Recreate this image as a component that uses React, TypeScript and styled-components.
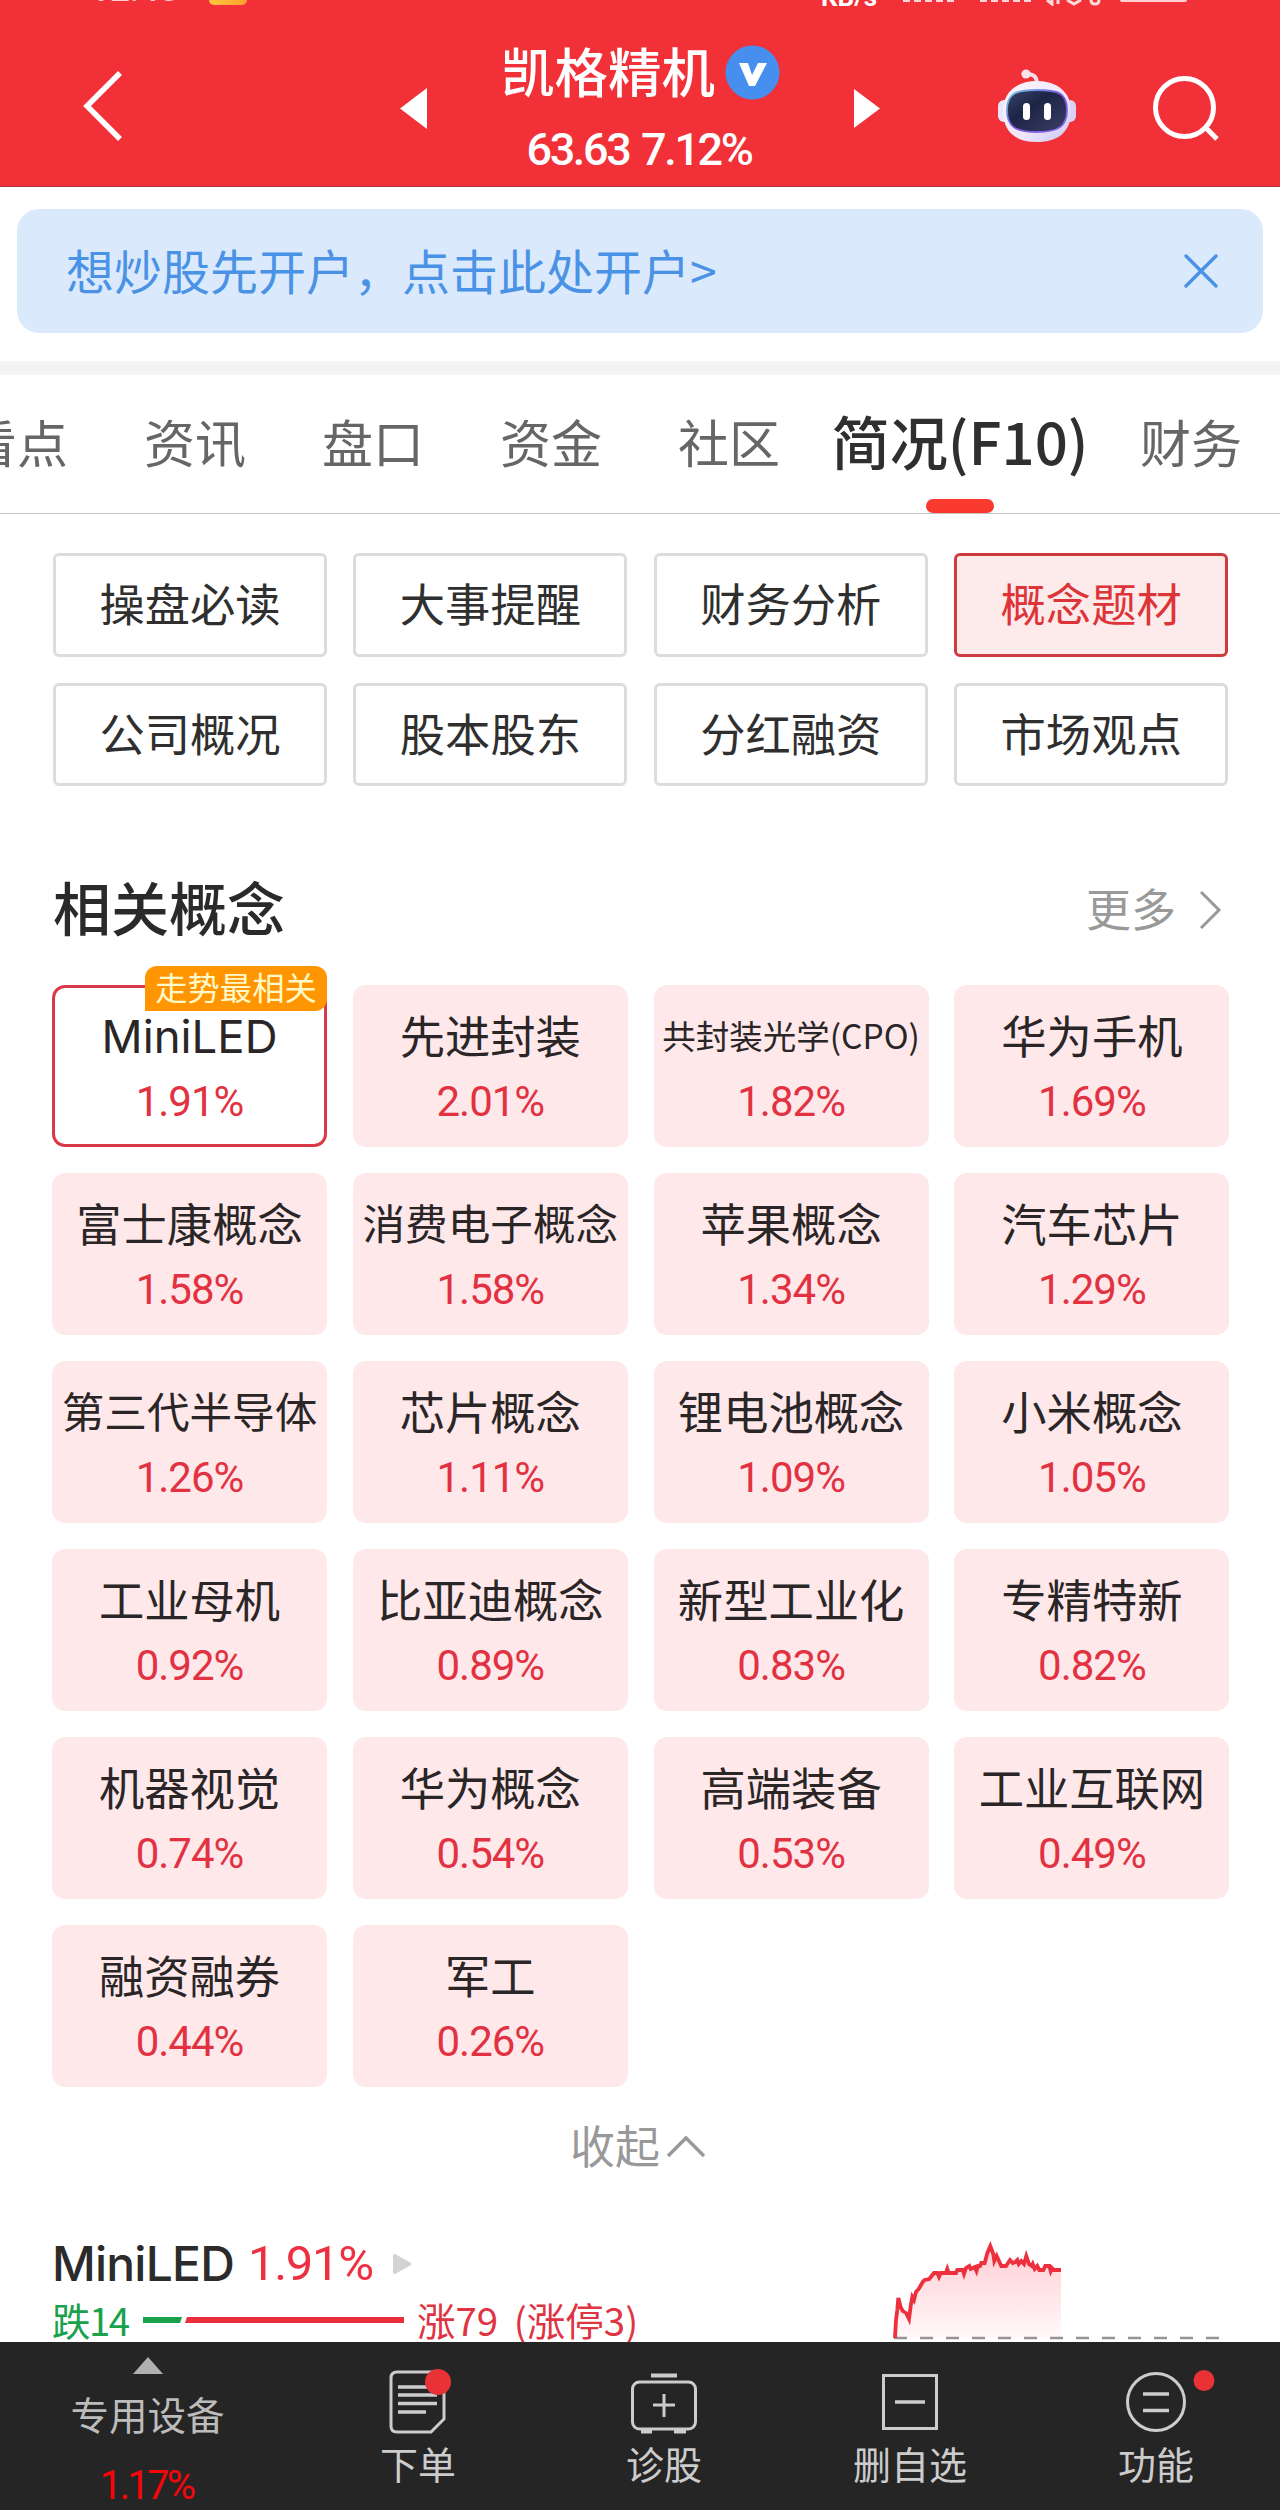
import React from 'react';
import styled, { createGlobalStyle, css } from 'styled-components';

const CJK = "'Noto Sans CJK SC', sans-serif";
const NUM = "Roboto, 'Noto Sans CJK SC', sans-serif";

const Global = createGlobalStyle`
  * { box-sizing: border-box; }
  body { margin: 0; background: #fff; font-family: ${CJK}; color: #2b2b2b; }
`;

const Page = styled.div`
  width: 1280px;
  height: 2510px;
  overflow: hidden;
  display: flex;
  flex-direction: column;
  background: #fff;
`;

/* ---------- header ---------- */
const Header = styled.header`
  height: 187px;
  flex: none;
  background: #f23038;
  border-bottom: 1px solid #a83a42;
  color: #fff;
`;
const StatusBar = styled.div`
  height: 6px;
  overflow: hidden;
  display: flex;
  align-items: flex-start;
  padding: 0 93px 0 90px;
`;
const Clock = styled.span`
  font: 500 35px/32px ${NUM};
  margin-top: -26px;
  width: 119px;
  opacity: 0.75;
`;
const StatusChip = styled.span`
  width: 38px;
  height: 5px;
  border-radius: 0 0 8px 8px;
  background: linear-gradient(90deg, #ffc53d, #ff9f2e);
`;
const Speed = styled.span`
  font: 700 26px/26px ${NUM};
  margin: -16px 23px 0 auto;
  width: 59px;
`;
const Signal = styled.span`
  width: 53px;
  height: 2px;
  margin-right: 24px;
  background: repeating-linear-gradient(90deg, #ffd5d7 0 7px, transparent 7px 11px);
`;
const Battery = styled.span`
  width: 67px;
  height: 2px;
  border-radius: 0 0 6px 6px;
  background: #ffd0d2;
  margin-left: 18px;
`;
const NavRow = styled.div`
  height: 180px;
  display: flex;
  align-items: flex-start;
  padding: 0 61px 0 82px;
`;
const Glyph = styled.svg<{ $top?: number; $left?: number }>`
  display: block;
  flex: none;
  overflow: visible;
  margin-top: ${(p) => p.$top ?? 0}px;
  margin-left: ${(p) => p.$left ?? 0}px;
`;
const StockTitle = styled.div`
  width: 300px;
  margin-left: 65px;
  display: flex;
  flex-direction: column;
  align-items: center;
`;
const StockName = styled.div`
  display: flex;
  align-items: center;
  gap: 10px;
  margin-top: 36px;
  height: 60px;
  font-size: 53.5px;
  line-height: 60px;
  font-weight: 500;
  white-space: nowrap;
`;
const Lifted = styled.span`
  padding-bottom: 4px;
`;
const Price = styled.div`
  margin-top: 22px;
  font: 500 45px/52px ${NUM};
  letter-spacing: -2.4px;
  word-spacing: 3px;
  padding-right: 3px;
  white-space: nowrap;
`;

/* ---------- banner ---------- */
const Banner = styled.div`
  margin: 22px 17px 28px;
  height: 124px;
  flex: none;
  border-radius: 22px;
  background: #dae9fb;
  color: #4a92e6;
  display: flex;
  align-items: center;
  justify-content: space-between;
  padding: 0 45px 0 49px;
  font-size: 48px;
  line-height: 60px;
`;
const Divider = styled.div`
  height: 14px;
  flex: none;
  background: #f4f4f4;
`;

/* ---------- tabs ---------- */
const Tabs = styled.nav`
  height: 139px;
  flex: none;
  border-bottom: 1px solid #c4c4c4;
  display: flex;
  align-items: stretch;
`;
const Tab = styled.div<{ $active?: boolean }>`
  width: 178px;
  flex: none;
  display: flex;
  flex-direction: column;
  align-items: center;
  white-space: nowrap;
  font-size: 51px;
  line-height: 60px;
  padding-top: 36px;
  color: #666;
  &:first-child { margin-left: -72px; }
  ${(p) =>
    p.$active &&
    css`
      width: 284px;
      padding-top: 35px;
      color: #2f2f2f;
      font-weight: 500;
      font-size: 58.2px;
    `}
`;
const Indicator = styled.div`
  width: 68px;
  height: 14px;
  margin-top: 29px;
  border-radius: 7px;
  background: #fa3a2f;
`;

/* ---------- sub navigation ---------- */
const SubNav = styled.div`
  display: grid;
  grid-template-columns: repeat(4, 274px);
  grid-template-rows: 104px 103px;
  gap: 26px 26.4px;
  padding: 39px 0 0 53px;
  flex: none;
`;
const SubButton = styled.div<{ $active?: boolean }>`
  border: 3px solid ${(p) => (p.$active ? '#cf3a40' : '#dcdcdc')};
  border-radius: 6px;
  background: ${(p) => (p.$active ? '#fdeaea' : '#fff')};
  color: ${(p) => (p.$active ? '#dc3438' : '#2f2f2f')};
  display: flex;
  justify-content: center;
  align-items: center;
  font-size: 45.3px;
  line-height: 60px;
  padding-bottom: 6px;
`;

/* ---------- concepts ---------- */
const SectionHead = styled.div`
  height: 80px;
  margin: 83px 59px 0 53px;
  flex: none;
  display: flex;
  align-items: center;
  justify-content: space-between;
`;
const SectionTitle = styled.h2`
  margin: 0;
  padding-bottom: 5px;
  font-size: 58px;
  line-height: 75px;
  font-weight: 500;
  color: #2a2a2a;
`;
const More = styled.div`
  display: flex;
  align-items: center;
  gap: 23px;
  margin-top: 2px;
  color: #999;
  font-size: 45px;
  line-height: 60px;
`;
const Tiles = styled.div`
  display: grid;
  grid-template-columns: repeat(4, 275px);
  grid-auto-rows: 162px;
  gap: 26px 25.8px;
  padding: 36px 0 0 52px;
  flex: none;
`;
const Tile = styled.div<{ $selected?: boolean }>`
  position: relative;
  border-radius: 13px;
  background: ${(p) => (p.$selected ? '#fff' : '#fee8ea')};
  box-shadow: ${(p) => (p.$selected ? 'inset 0 0 0 3px #d93a48' : 'none')};
  display: flex;
  flex-direction: column;
  align-items: center;
  padding-top: 18px;
`;
const TileName = styled.div<{ $size: number; $latin?: boolean; $drop: number }>`
  font-family: ${(p) => (p.$latin ? `Inter, ${CJK}` : CJK)};
  font-size: ${(p) => p.$size}px;
  padding-top: ${(p) => p.$drop * 2}px;
  line-height: ${(p) => 62 - p.$drop * 2}px;
  color: #2a2526;
  white-space: nowrap;
`;
const TilePct = styled.div`
  margin-top: 11px;
  font: 400 42px/52px ${NUM};
  letter-spacing: -1px;
  color: #e23242;
`;
const Badge = styled.div`
  position: absolute;
  right: 0;
  top: -19px;
  width: 182px;
  height: 45px;
  border-radius: 12px 12px 12px 0;
  background: #ff9500;
  color: #fff8c8;
  font-size: 32.3px;
  line-height: 41px;
  text-align: center;
  white-space: nowrap;
`;
const Collapse = styled.div`
  height: 60px;
  margin-top: 30px;
  flex: none;
  display: flex;
  align-items: center;
  padding-left: 570px;
  gap: 7px;
  color: #999;
  font-size: 45px;
  line-height: 60px;
`;

/* ---------- detail ---------- */
const Detail = styled.div`
  flex: 1;
  min-height: 0;
  display: flex;
  padding: 57px 59px 0 52px;
  justify-content: space-between;
`;
const DetailInfo = styled.div`
  display: flex;
  flex-direction: column;
`;
const DetailTitle = styled.div`
  display: flex;
  align-items: center;
  height: 56px;
  margin-top: 2px;
`;
const DetailName = styled.span`
  font: 500 48px/56px Inter, ${CJK};
  letter-spacing: -0.8px;
  width: 196px;
  white-space: nowrap;
`;
const DetailPct = styled.span`
  font: 400 49px/56px ${NUM};
  width: 145px;
  letter-spacing: -1.3px;
  color: #ee3040;
`;
const Breadth = styled.div`
  display: flex;
  align-items: center;
  height: 56px;
  font-size: 38.5px;
  line-height: 56px;
  white-space: nowrap;
`;
const Down = styled.span`
  color: #18a24c;
  width: 91px;
  letter-spacing: -1.6px;
  padding-bottom: 2px;
`;
const Up = styled.span`
  color: #df3442;
  margin-left: 13px;
  word-spacing: 7px;
  padding-bottom: 2px;
`;

/* ---------- footer ---------- */
const Footer = styled.footer`
  height: 168px;
  flex: none;
  background: #252525;
  color: #ccc;
  display: grid;
  grid-template-columns: 295px repeat(4, 246px);
`;
const Industry = styled.div`
  display: flex;
  flex-direction: column;
  align-items: center;
  font-size: 38.5px;
  line-height: 50px;
  color: #bcbcbc;
`;
const IndustryName = styled.div`
  margin-top: 14px;
`;
const IndustryPct = styled.div`
  margin-top: 23px;
  font: 400 40px/50px ${NUM};
  letter-spacing: -2.8px;
  padding-right: 2px;
  color: #f5060a;
`;
const Action = styled.div`
  display: flex;
  flex-direction: column;
  align-items: center;
  padding-top: 20px;
  font-size: 38px;
  line-height: 46px;
`;

type Concept = [name: string, pct: string, size?: number, drop?: number];
const concepts: Concept[] = [
  ['MiniLED', '1.91%', 45.5, 3],
  ['先进封装', '2.01%'],
  ['共封装光学(CPO)', '1.82%', 33.5, 1],
  ['华为手机', '1.69%'],
  ['富士康概念', '1.58%'],
  ['消费电子概念', '1.58%', 42.6],
  ['苹果概念', '1.34%'],
  ['汽车芯片', '1.29%'],
  ['第三代半导体', '1.26%', 42.6],
  ['芯片概念', '1.11%'],
  ['锂电池概念', '1.09%'],
  ['小米概念', '1.05%'],
  ['工业母机', '0.92%'],
  ['比亚迪概念', '0.89%'],
  ['新型工业化', '0.83%'],
  ['专精特新', '0.82%'],
  ['机器视觉', '0.74%'],
  ['华为概念', '0.54%'],
  ['高端装备', '0.53%'],
  ['工业互联网', '0.49%'],
  ['融资融券', '0.44%'],
  ['军工', '0.26%'],
];
const subNav = ['操盘必读', '大事提醒', '财务分析', '概念题材', '公司概况', '股本股东', '分红融资', '市场观点'];
const tabs = ['看点', '资讯', '盘口', '资金', '社区', '简况(F10)', '财务'];

const Robot = () => (
  <Glyph $top={58} $left={117} width="80" height="78" viewBox="0 0 80 78">
    <defs>
      <linearGradient id="shell" x1="0" y1="0" x2="1" y2="1">
        <stop offset="0" stopColor="#fff5fa" />
        <stop offset="0.6" stopColor="#eee6fa" />
        <stop offset="1" stopColor="#c9c6f2" />
      </linearGradient>
      <linearGradient id="rim" x1="0" y1="0" x2="1" y2="1">
        <stop offset="0" stopColor="#6fd0e4" />
        <stop offset="0.5" stopColor="#7a52d8" />
        <stop offset="1" stopColor="#8a6cf2" />
      </linearGradient>
      <linearGradient id="face" x1="0" y1="0" x2="1" y2="1">
        <stop offset="0" stopColor="#3a4467" />
        <stop offset="0.4" stopColor="#1d2547" />
        <stop offset="1" stopColor="#3b3f66" />
      </linearGradient>
    </defs>
    <path d="M29 10 Q40 9 40 20" fill="none" stroke="#f3dfea" strokeWidth="4" />
    <circle cx="29" cy="10" r="4.6" fill="#fbe3ee" />
    <rect x="1" y="36" width="14" height="22" rx="6" fill="#e9e6fb" />
    <rect x="65" y="36" width="14" height="22" rx="6" fill="#d9d2f6" />
    <path d="M40 17C60 17 74 28 74 47C74 68 61 78 40 78S6 68 6 47C6 28 20 17 40 17Z" fill="url(#shell)" />
    <path d="M40 26C61 26 70 29 70 46S61 68 40 68S10 63 10 46S19 26 40 26Z" fill="url(#face)" stroke="url(#rim)" strokeWidth="1.8" />
    <rect x="26" y="39" width="7" height="17" rx="3.5" fill="#fff" />
    <rect x="47" y="39" width="7" height="17" rx="3.5" fill="#fff" />
  </Glyph>
);

const CHART_LINE =
  '1,94 2,76 3.3,66 4.3,54 6.7,63 8.7,67 12,69 15,75 16.7,62 18.3,53 20,56 22,48 24.7,45 28.7,38 30.7,36 35.3,35 40,29 43.3,29 45,33 46.7,29 52,29 53.3,25 54.7,29 62,29 63.3,26 68.7,26 70,30 72,24 75.3,22 76.7,25 80.7,23 82.5,27 84,22 86,22 87.3,19 90.7,19 93.3,9 96.3,2 99.3,10 100.3,17 102.7,12 107.3,22 112,22 116,16 118.7,19 121.3,18 123.3,16 124.7,20 127.3,17 130,20 132.3,12 135,20 137.7,22 138.7,20 140.7,25 143.3,22 145.3,26 149.3,26 151.3,22 155.3,22 156.7,27 158,24 160,26 167,26';

const App: React.FC = () => (
  <>
    <Global />
    <Page>
      <Header>
        <StatusBar>
          <Clock>12:48</Clock>
          <StatusChip />
          <Speed>KB/s</Speed>
          <Signal />
          <Signal />
          <Glyph width="55" height="5" viewBox="0 0 55 5" $left={-10}>
            <path d="M0 0L5 4V0M11 0V4M20 0L27 4L34 0M44 0Q44 4 48 4T52 0" fill="none" stroke="#ffdadb" strokeWidth="3" />
          </Glyph>
          <Battery />
        </StatusBar>
        <NavRow>
          <Glyph $top={65} width="41" height="70" viewBox="0 0 41 70">
            <path d="M38 2L5 35L38 68" fill="none" stroke="#fff" strokeWidth="5.5" />
          </Glyph>
          <Glyph $top={82} $left={277} width="27" height="41" viewBox="0 0 27 41">
            <path d="M27 0V41L0 20.5Z" fill="#fff" />
          </Glyph>
          <StockTitle>
            <StockName>
              <Lifted>凯格精机</Lifted>
              <Glyph width="55" height="55" viewBox="0 0 55 55">
                <circle cx="27.5" cy="27.5" r="27" fill="#468fee" />
                <path d="M14 18H23L27 30L33 18H42L30 41H24Z" fill="#fff" />
              </Glyph>
            </StockName>
            <Price>63.63 7.12%</Price>
          </StockTitle>
          <Glyph $top={83} $left={65} width="26" height="39" viewBox="0 0 26 39">
            <path d="M0 0L26 19.5L0 39Z" fill="#fff" />
          </Glyph>
          <Robot />
          <Glyph $top={70} $left={76} width="66" height="66" viewBox="0 0 66 66">
            <circle cx="31.5" cy="31.5" r="29" fill="none" stroke="#fff" strokeWidth="5" />
            <path d="M52 51L64 63" stroke="#fff" strokeWidth="5" />
          </Glyph>
        </NavRow>
      </Header>

      <Banner>
        <Lifted>想炒股先开户，点击此处开户&gt;</Lifted>
        <Glyph width="34" height="34" viewBox="0 0 34 34">
          <path d="M2 2L32 32M32 2L2 32" stroke="#4a92e6" strokeWidth="3.4" strokeLinecap="round" />
        </Glyph>
      </Banner>
      <Divider />

      <Tabs>
        {tabs.map((t, i) => (
          <Tab key={t} $active={i === 5}>
            {t}
            {i === 5 && <Indicator />}
          </Tab>
        ))}
      </Tabs>

      <SubNav>
        {subNav.map((t, i) => (
          <SubButton key={t} $active={i === 3}>{t}</SubButton>
        ))}
      </SubNav>

      <SectionHead>
        <SectionTitle>相关概念</SectionTitle>
        <More>
          <Lifted>更多</Lifted>
          <Glyph width="22" height="38" viewBox="0 0 22 38">
            <path d="M2 1L20 19L2 37" fill="none" stroke="#999" strokeWidth="3" />
          </Glyph>
        </More>
      </SectionHead>

      <Tiles>
        {concepts.map(([name, pct, size, drop], i) => (
          <Tile key={name} $selected={i === 0}>
            {i === 0 && <Badge>走势最相关</Badge>}
            <TileName $size={size ?? 45.3} $drop={drop ?? 0} $latin={i === 0}>{name}</TileName>
            <TilePct>{pct}</TilePct>
          </Tile>
        ))}
      </Tiles>

      <Collapse>
        <Lifted>收起</Lifted>
        <Glyph width="38" height="22" viewBox="0 0 38 22">
          <path d="M1 20L19 2L37 20" fill="none" stroke="#999" strokeWidth="3.4" />
        </Glyph>
      </Collapse>

      <Detail>
        <DetailInfo>
          <DetailTitle>
            <DetailName>MiniLED</DetailName>
            <DetailPct>1.91%</DetailPct>
            <Glyph width="19" height="20" viewBox="0 0 19 20">
              <path d="M0 1Q0 0 2 0L18 9Q19 10 18 11L2 20Q0 20 0 19Z" fill="#d3d3d3" />
            </Glyph>
          </DetailTitle>
          <Breadth>
            <Down>跌14</Down>
            <Glyph width="261" height="6" viewBox="0 0 261 6">
              <path d="M0 0H39L37 6H0Z" fill="#18a24c" />
              <path d="M44 0H261V6H42Z" fill="#ea2e3c" />
            </Glyph>
            <Up>涨79 (涨停3)</Up>
          </Breadth>
        </DetailInfo>
        <Glyph $top={10} width="327" height="96" viewBox="0 0 327 96">
          <defs>
            <linearGradient id="area" x1="0" y1="0" x2="0" y2="1">
              <stop offset="0" stopColor="#ff2038" stopOpacity="0.22" />
              <stop offset="1" stopColor="#ff2038" stopOpacity="0.03" />
            </linearGradient>
          </defs>
          <polygon points={`${CHART_LINE} 167,94 1,94`} fill="url(#area)" />
          <path d="M0 94H326" stroke="#989292" strokeWidth="2.4" strokeDasharray="13 13" />
          <polyline points={CHART_LINE} fill="none" stroke="#ee2f3e" strokeWidth="3.8" />
        </Glyph>
      </Detail>

      <Footer>
        <Industry>
          <Glyph $top={15} width="30" height="17" viewBox="0 0 30 17">
            <path d="M15 0L30 17H0Z" fill="#b0b0b0" />
          </Glyph>
          <IndustryName>专用设备</IndustryName>
          <IndustryPct>1.17%</IndustryPct>
        </Industry>
        <Action>
          <Glyph width="70" height="78" viewBox="0 0 70 78">
            <path d="M14 10H55Q61 10 61 16V57L48 70H14Q8 70 8 64V16Q8 10 14 10Z" fill="none" stroke="#ccc" strokeWidth="3" />
            <path d="M15 25H50M15 33H54M15 41.500H54M15 50H43" stroke="#ccc" strokeWidth="3.4" />
            <circle cx="55" cy="20" r="13" fill="#e93235" />
          </Glyph>
          下单
        </Action>
        <Action>
          <Glyph width="70" height="78" viewBox="0 0 70 78">
            <rect x="3.500" y="20" width="63" height="47" rx="7" fill="none" stroke="#ccc" strokeWidth="3" />
            <path d="M22 13.500H48M12 69.500H23M45 69.500H57" stroke="#ccc" strokeWidth="4" />
            <path d="M24 43H46M35 32V55" stroke="#ccc" strokeWidth="3" />
          </Glyph>
          诊股
        </Action>
        <Action>
          <Glyph width="70" height="78" viewBox="0 0 70 78">
            <rect x="8.500" y="13.500" width="53" height="53" fill="none" stroke="#ccc" strokeWidth="3" />
            <path d="M20 40H50" stroke="#ccc" strokeWidth="3.500" />
          </Glyph>
          删自选
        </Action>
        <Action>
          <Glyph width="70" height="78" viewBox="0 0 70 78">
            <circle cx="35" cy="40" r="28.500" fill="none" stroke="#ccc" strokeWidth="3" />
            <path d="M22 32H48M22 48.500H48" stroke="#ccc" strokeWidth="3.500" />
            <circle cx="83" cy="18.500" r="10.500" fill="#e93235" />
          </Glyph>
          功能
        </Action>
      </Footer>
    </Page>
  </>
);

export default App;
